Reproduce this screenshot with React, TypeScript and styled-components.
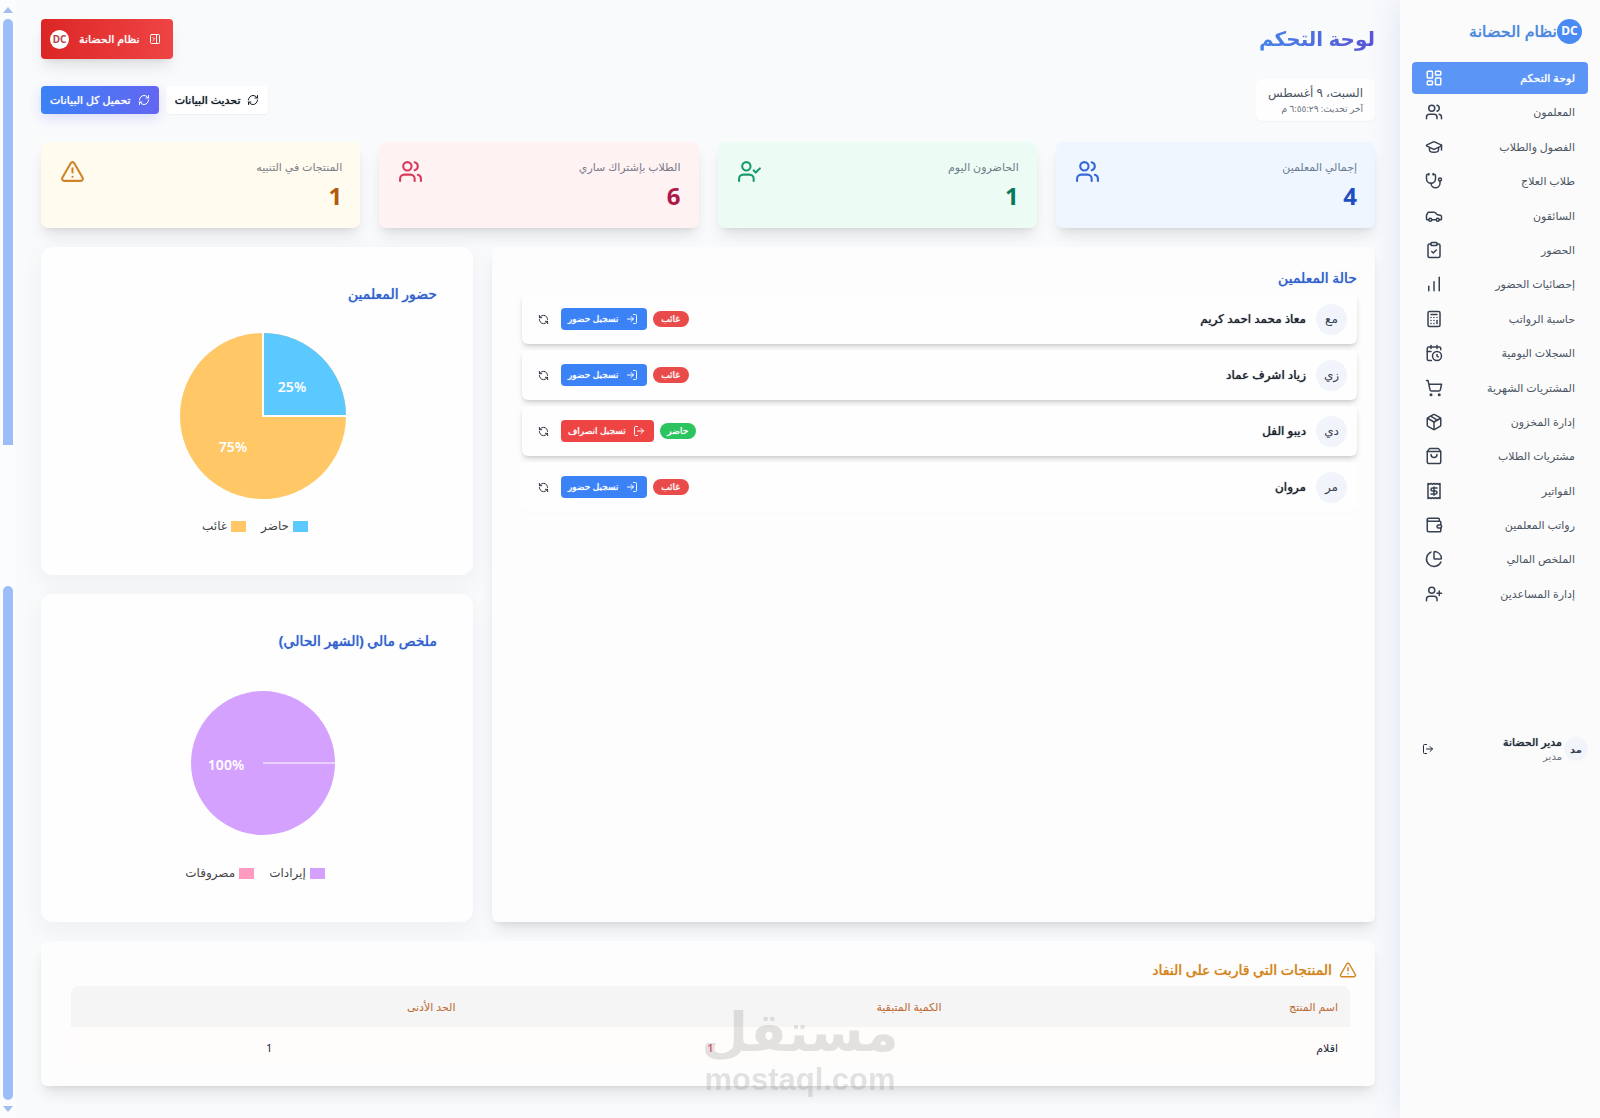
import React from 'react';
import styled, { createGlobalStyle, css } from 'styled-components';
import {
  LayoutDashboard,
  Users,
  GraduationCap,
  Stethoscope,
  Car,
  ClipboardCheck,
  ChartNoAxesColumnIncreasing,
  Calculator,
  CalendarClock,
  ShoppingCart,
  Package,
  ShoppingBag,
  Receipt,
  Wallet,
  ChartPie,
  UserPlus,
  UserCheck,
  TriangleAlert,
  RefreshCw,
  RefreshCcw,
  LogIn,
  LogOut,
  PanelRightClose,
} from 'lucide-react';

const GlobalStyle = createGlobalStyle`
  *, *::before, *::after { box-sizing: border-box; }
  body {
    margin: 0;
    background: #f9fafc;
    color: #1f2937;
    font-family: "Noto Sans", "DejaVu Sans", sans-serif;
    font-size: 11px;
    line-height: 16px;
  }
  h1, h2, p, ul, dl, dt, dd { margin: 0; padding: 0; }
  ul { list-style: none; }
  button { font-family: inherit; border: 0; cursor: pointer; }
`;

/* A weight between regular and bold for Arabic labels. */
const medium = css`
  font-weight: 500;
  text-shadow: 0 0 1px currentColor;
`;

const raised = css`
  box-shadow: 0 10px 15px -3px rgba(0, 0, 0, 0.1), 0 4px 6px -4px rgba(0, 0, 0, 0.1);
`;

/* ---------- Shell ---------- */

const Shell = styled.div`
  position: relative;
  display: flex;
  min-height: 100vh;
`;

const Sidebar = styled.aside`
  flex: 0 0 200px;
  z-index: 1;
  display: flex;
  flex-direction: column;
  padding: 18px 12px;
  background: #fbfbfc;
  box-shadow: 0 0 32px rgba(64, 88, 190, 0.14);
`;

const Main = styled.main`
  flex: 1;
  min-width: 0;
  padding: 19px 25px 31px;
  display: flex;
  flex-direction: column;
  gap: 19px;
`;

/* ---------- Sidebar ---------- */

const Brand = styled.div`
  display: flex;
  align-items: center;
  padding: 0 6px;
  height: 26px;
  margin-bottom: 18px;
  color: #4c86dd;
  font-size: 16px;
  ${medium}
`;

const BrandMark = styled.span<{ $size: number; $inverse?: boolean }>`
  display: flex;
  align-items: center;
  justify-content: center;
  width: ${(p) => p.$size}px;
  height: ${(p) => p.$size}px;
  border-radius: 50%;
  background: ${(p) => (p.$inverse ? '#ffffff' : '#4a8af4')};
  color: ${(p) => (p.$inverse ? '#b4444c' : '#ffffff')};
  font-size: ${(p) => (p.$inverse ? 10 : 12)}px;
  font-weight: 700;
  text-shadow: none;
`;

const NavList = styled.ul`
  display: flex;
  flex-direction: column;
  justify-content: space-between;
  height: 548px;
`;

const NavLink = styled.a<{ $active?: boolean }>`
  display: flex;
  align-items: center;
  justify-content: space-between;
  height: 32px;
  padding: 0 13px;
  border-radius: 4px;
  color: #4b5563;
  font-size: 11px;
  text-decoration: none;
  svg { color: #374151; }
  ${(p) =>
    p.$active &&
    css`
      background: #5b95f5;
      color: #ffffff;
      ${medium}
      svg { color: #ffffff; }
    `}
`;

const Account = styled.div`
  display: flex;
  align-items: center;
  justify-content: space-between;
  margin-top: 124px;
  padding-left: 4px;
`;

const AccountInfo = styled.div`
  display: flex;
  align-items: center;
  gap: 2px;
`;

const Avatar = styled.span<{ $size: number }>`
  display: flex;
  align-items: center;
  justify-content: center;
  width: ${(p) => p.$size}px;
  height: ${(p) => p.$size}px;
  border-radius: 50%;
  background: #f1f5fb;
  color: #374151;
  font-size: ${(p) => (p.$size > 24 ? 12 : 10)}px;
`;

const AccountName = styled.p`
  font-size: 11px;
  line-height: 15px;
  ${medium}
`;

const AccountRole = styled.p`
  color: #6b7280;
  font-size: 10px;
  line-height: 15px;
`;

const IconButton = styled.button`
  display: flex;
  align-items: center;
  justify-content: center;
  width: 24px;
  height: 24px;
  padding: 0;
  border-radius: 4px;
  background: transparent;
  color: #1f2937;
`;

/* ---------- Header ---------- */

const Header = styled.header`
  display: flex;
  align-items: center;
  justify-content: space-between;
  height: 40px;
`;

const PageTitle = styled.h1`
  font-size: 20px;
  line-height: 36px;
  font-weight: 700;
  color: transparent;
  background: linear-gradient(to left, #5b54d6, #4585e8);
  background-clip: text;
  -webkit-background-clip: text;
`;

const SystemButton = styled.button`
  display: flex;
  align-items: center;
  gap: 10px;
  height: 40px;
  padding: 0 12px 0 9px;
  border-radius: 4px;
  background: linear-gradient(to left, #ef4444, #dc2626);
  color: #ffffff;
  font-size: 11px;
  line-height: 16px;
  ${raised}
  ${medium}
`;

const Toolbar = styled.div`
  display: flex;
  align-items: center;
  justify-content: space-between;
  margin: 1px 0 2px;
`;

const DateCard = styled.div`
  padding: 5px 12px;
  border-radius: 6px;
  background: #fefefe;
  box-shadow: 0 1px 2px rgba(0, 0, 0, 0.04);
`;

const DateText = styled.p`
  color: #4b5563;
  font-size: 12px;
  line-height: 18px;
`;

const UpdatedText = styled.p`
  color: #6b7280;
  font-size: 9px;
  line-height: 14px;
`;

const Actions = styled.div`
  display: flex;
  gap: 7px;
`;

const ActionButton = styled.button<{ $primary?: boolean }>`
  display: flex;
  align-items: center;
  gap: 7px;
  height: 28px;
  padding: 0 9px;
  border-radius: 4px;
  background: ${(p) => (p.$primary ? 'linear-gradient(to left, #6366f1, #3b82f6)' : '#ffffff')};
  box-shadow: ${(p) =>
    p.$primary ? '0 4px 12px rgba(99, 102, 241, 0.2)' : '0 1px 2px rgba(0, 0, 0, 0.05)'};
  color: ${(p) => (p.$primary ? '#ffffff' : '#111827')};
  font-size: 11px;
  line-height: 16px;
  ${medium}
`;

/* ---------- Cards ---------- */

const StatGrid = styled.dl`
  display: grid;
  grid-template-columns: repeat(4, 1fr);
  gap: 19px;
`;

const StatCard = styled.div<{ $bg: string; $label: string; $value: string; $icon: string }>`
  display: flex;
  justify-content: space-between;
  height: 86px;
  padding: 17px 18px 17px 19px;
  border-radius: 7px;
  background: ${(p) => p.$bg};
  ${raised}
  dt { color: ${(p) => p.$label}; font-size: 11px; line-height: 16px; }
  dd { color: ${(p) => p.$value}; font-size: 24px; line-height: 34px; margin-top: 4px; font-weight: 700; }
  svg { color: ${(p) => p.$icon}; }
`;

const Panels = styled.div`
  display: grid;
  grid-template-columns: repeat(3, 1fr);
  gap: 19px;
`;

const Card = styled.section`
  padding: 21px 18px;
  border-radius: 6px;
  background: #fdfdfd;
  ${raised}
`;

const TeachersCard = styled(Card)`
  grid-column: span 2;
`;

const CardTitle = styled.h2<{ $warn?: boolean }>`
  display: flex;
  align-items: center;
  gap: 7px;
  color: ${(p) => (p.$warn ? '#d38422' : '#3160cc')};
  font-size: 14px;
  line-height: 20px;
  ${medium}
`;

const TeacherList = styled.ul`
  display: flex;
  flex-direction: column;
  gap: 6px;
  margin: 6px 0 0 12px;
`;

const TeacherRow = styled.li`
  display: flex;
  align-items: center;
  justify-content: space-between;
  height: 50px;
  padding: 0 10px 0 9px;
  border-radius: 6px;
  background: #fefefe;
  box-shadow: 0 4px 6px -1px rgba(0, 0, 0, 0.14), 0 2px 4px -2px rgba(0, 0, 0, 0.14);
  &:last-child { box-shadow: 0 1px 1px -1px rgba(0, 0, 0, 0.12); }
`;

const TeacherName = styled.div`
  display: flex;
  align-items: center;
  gap: 10px;
  font-size: 12px;
  color: #1f2430;
  ${medium}
  span { font-weight: 400; text-shadow: none; }
`;

const RowActions = styled.div`
  display: flex;
  align-items: center;
  gap: 6px;
`;

const Badge = styled.span<{ $present?: boolean }>`
  width: 36px;
  border-radius: 8px;
  text-align: center;
  background: ${(p) => (p.$present ? '#2bc45f' : '#e94b4b')};
  color: #ffffff;
  font-size: 9px;
  line-height: 16px;
  ${medium}
`;

const CheckButton = styled.button<{ $out?: boolean }>`
  display: flex;
  align-items: center;
  gap: 7px;
  height: 22px;
  padding: 0 9px 0 7px;
  border-radius: 4px;
  background: ${(p) => (p.$out ? '#ef4444' : '#3b82f6')};
  color: #ffffff;
  font-size: 9px;
  line-height: 16px;
  ${medium}
`;

/* ---------- Charts ---------- */

const ChartColumn = styled.div`
  display: grid;
  gap: 19px;
`;

const ChartCard = styled.section`
  height: 328px;
  padding: 37px 36px 0;
  border-radius: 12px;
  background: #fefefe;
  box-shadow: 0 8px 24px rgba(30, 41, 59, 0.05);
`;

const PieFrame = styled.div`
  display: flex;
  justify-content: center;
  padding-left: 12px;
  margin-top: 11px;
  height: 202px;
  align-items: center;
  svg text { fill: #ffffff; font-size: 14px; font-weight: 600; text-anchor: middle; }
`;

const Legend = styled.ul`
  display: flex;
  justify-content: center;
  gap: 15px;
  padding-right: 4px;
`;

const LegendItem = styled.li<{ $color: string }>`
  display: flex;
  align-items: center;
  gap: 4px;
  color: #444444;
  font-size: 12px;
  line-height: 18px;
  &::before { content: ''; width: 15px; height: 11px; background: ${(p) => p.$color}; }
`;

/* ---------- Stock table ---------- */

const StockCard = styled(Card)`
  padding: 19px 18px 18px;
`;

const StockTable = styled.table`
  width: calc(100% - 19px);
  margin: 6px 7px 0 12px;
  border-collapse: separate;
  border-spacing: 0;
  table-layout: fixed;
  th, td { height: 41px; padding: 0 12px; font-size: 11px; line-height: 16px; }
  th { background: #f5f5f5; color: #bd6b35; text-align: right; font-weight: 500; }
  th:nth-child(1) { width: 31%; border-radius: 0 8px 0 0; }
  th:nth-child(2) { width: 38%; }
  th:nth-child(3) { width: 31%; border-radius: 8px 0 0 0; }
  td { background: #fefdfb; color: #1f2937; text-align: center; }
  td:nth-child(1) { text-align: right; }
  td:nth-child(2) { color: #f0566a; font-weight: 600; }
`;

/* ---------- Watermark ---------- */

const Watermark = styled.div`
  position: absolute;
  left: 0;
  right: 0;
  bottom: 21px;
  color: #787873;
  opacity: 0.2;
  text-align: center;
  font-weight: 700;
  pointer-events: none;
`;

const WatermarkName = styled.p`
  font-family: "DejaVu Sans", sans-serif;
  font-size: 54px;
  line-height: 60px;
`;

const WatermarkSite = styled.p`
  font-family: "Liberation Sans", sans-serif;
  font-size: 31px;
  line-height: 34px;
`;

/* ---------- Scroll rail ---------- */

const Rail = styled.div`
  flex: 0 0 16px;
  display: flex;
  flex-direction: column;
  align-items: flex-end;
  gap: 6px;
  padding: 7px 3px 6px;
  background: #fbfcfd;
`;

const RailArrow = styled.svg`
  width: 10px;
  height: 6px;
  fill: #a3bdee;
`;

const Thumb = styled.div<{ $grow: number; $open?: boolean }>`
  flex: ${(p) => p.$grow} 1 0;
  width: 10px;
  border-radius: ${(p) => (p.$open ? '5px 5px 0 0' : '5px')};
  background: #9dbdf8;
`;

const RailGap = styled.div`
  flex: 128 1 0;
`;

/* ---------- Data ---------- */

const navItems = [
  { label: 'لوحة التحكم', Icon: LayoutDashboard, active: true },
  { label: 'المعلمون', Icon: Users },
  { label: 'الفصول والطلاب', Icon: GraduationCap },
  { label: 'طلاب العلاج', Icon: Stethoscope },
  { label: 'السائقون', Icon: Car },
  { label: 'الحضور', Icon: ClipboardCheck },
  { label: 'إحصائيات الحضور', Icon: ChartNoAxesColumnIncreasing },
  { label: 'حاسبة الرواتب', Icon: Calculator },
  { label: 'السجلات اليومية', Icon: CalendarClock },
  { label: 'المشتريات الشهرية', Icon: ShoppingCart },
  { label: 'إدارة المخزون', Icon: Package },
  { label: 'مشتريات الطلاب', Icon: ShoppingBag },
  { label: 'الفواتير', Icon: Receipt },
  { label: 'رواتب المعلمين', Icon: Wallet },
  { label: 'الملخص المالي', Icon: ChartPie },
  { label: 'إدارة المساعدين', Icon: UserPlus },
];

const stats = [
  { label: 'إجمالي المعلمين', value: 4, Icon: Users, bg: '#eff6ff', tone: '#6b7c93', strong: '#1e4fc2', icon: '#3468d8' },
  { label: 'الحاضرون اليوم', value: 1, Icon: UserCheck, bg: '#ecfcf4', tone: '#6b7c88', strong: '#08785a', icon: '#179a6e' },
  { label: 'الطلاب بإشتراك ساري', value: 6, Icon: Users, bg: '#fef2f3', tone: '#7b7988', strong: '#b01846', icon: '#d93a5c' },
  { label: 'المنتجات في التنبيه', value: 1, Icon: TriangleAlert, bg: '#fffbee', tone: '#7a7f88', strong: '#b35a12', icon: '#cf8427' },
];

const teachers = [
  { initials: 'مع', name: 'معاذ محمد احمد كريم', present: false },
  { initials: 'زي', name: 'زياد اشرف عماد', present: false },
  { initials: 'دي', name: 'ديبو الفل', present: true },
  { initials: 'مر', name: 'مروان', present: false },
];

/* ---------- Page ---------- */

export default function App() {
  return (
    <>
      <GlobalStyle />
      <Shell dir="rtl" lang="ar">
        <Sidebar>
          <Brand>
            <BrandMark $size={25}>DC</BrandMark>
            نظام الحضانة
          </Brand>
          <nav>
            <NavList>
              {navItems.map(({ label, Icon, active }) => (
                <li key={label}>
                  <NavLink href="#" $active={active}>
                    {label}
                    <Icon size={18} />
                  </NavLink>
                </li>
              ))}
            </NavList>
          </nav>
          <Account>
            <AccountInfo>
              <Avatar $size={24}>
                <b>مد</b>
              </Avatar>
              <div>
                <AccountName>مدير الحضانة</AccountName>
                <AccountRole>مدير</AccountRole>
              </div>
            </AccountInfo>
            <IconButton aria-label="تسجيل الخروج">
              <LogOut size={12} />
            </IconButton>
          </Account>
        </Sidebar>

        <Main>
          <Header>
            <PageTitle>لوحة التحكم</PageTitle>
            <SystemButton>
              <PanelRightClose size={12} />
              نظام الحضانة
              <BrandMark $size={19} $inverse>DC</BrandMark>
            </SystemButton>
          </Header>

          <Toolbar>
            <DateCard>
              <DateText>السبت، ٩ أغسطس</DateText>
              <UpdatedText>آخر تحديث: ٦:٥٥:٢٩ م</UpdatedText>
            </DateCard>
            <Actions>
              <ActionButton>
                <RefreshCw size={12} />
                تحديث البيانات
              </ActionButton>
              <ActionButton $primary>
                <RefreshCw size={12} />
                تحميل كل البيانات
              </ActionButton>
            </Actions>
          </Toolbar>

          <StatGrid>
            {stats.map(({ label, value, Icon, bg, tone, strong, icon }) => (
              <StatCard key={label} $bg={bg} $label={tone} $value={strong} $icon={icon}>
                <div>
                  <dt>{label}</dt>
                  <dd>{value}</dd>
                </div>
                <Icon size={25} />
              </StatCard>
            ))}
          </StatGrid>

          <Panels>
            <TeachersCard>
              <CardTitle>حالة المعلمين</CardTitle>
              <TeacherList>
                {teachers.map((t) => (
                  <TeacherRow key={t.name}>
                    <TeacherName>
                      <Avatar $size={31}>{t.initials}</Avatar>
                      {t.name}
                    </TeacherName>
                    <RowActions>
                      <Badge $present={t.present}>{t.present ? 'حاضر' : 'غائب'}</Badge>
                      <CheckButton $out={t.present}>
                        {t.present ? <LogOut size={12} /> : <LogIn size={12} />}
                        {t.present ? 'تسجيل انصراف' : 'تسجيل حضور'}
                      </CheckButton>
                      <IconButton aria-label="تحديث">
                        <RefreshCcw size={11} />
                      </IconButton>
                    </RowActions>
                  </TeacherRow>
                ))}
              </TeacherList>
            </TeachersCard>

            <ChartColumn>
              <ChartCard>
                <CardTitle>حضور المعلمين</CardTitle>
                <PieFrame>
                  <svg width="168" height="168" viewBox="-84 -84 168 168" direction="ltr">
                    <circle r="83" fill="#ffc766" />
                    <path d="M0 0V-83A83 83 0 0 1 83 0Z" fill="#5bc8ff" />
                    <path d="M0 -83V0H83" fill="none" stroke="#ffffff" strokeWidth="2" />
                    <text x="29" y="-24">25%</text>
                    <text x="-30" y="36">75%</text>
                  </svg>
                </PieFrame>
                <Legend>
                  <LegendItem $color="#5bc8ff">حاضر</LegendItem>
                  <LegendItem $color="#ffc766">غائب</LegendItem>
                </Legend>
              </ChartCard>
              <ChartCard>
                <CardTitle>ملخص مالي (الشهر الحالي)</CardTitle>
                <PieFrame>
                  <svg width="146" height="146" viewBox="-73 -73 146 146" direction="ltr">
                    <circle r="72" fill="#d4a1ff" />
                    <path d="M0 0H72" stroke="#ffffff" strokeWidth="1" />
                    <text x="-37" y="7">100%</text>
                  </svg>
                </PieFrame>
                <Legend>
                  <LegendItem $color="#d4a1ff">إيرادات</LegendItem>
                  <LegendItem $color="#ff9ac0">مصروفات</LegendItem>
                </Legend>
              </ChartCard>
            </ChartColumn>
          </Panels>

          <StockCard>
            <CardTitle $warn>
              <TriangleAlert size={18} />
              المنتجات التي قاربت على النفاد
            </CardTitle>
            <StockTable>
              <thead>
                <tr>
                  <th scope="col">اسم المنتج</th>
                  <th scope="col">الكمية المتبقية</th>
                  <th scope="col">الحد الأدنى</th>
                </tr>
              </thead>
              <tbody>
                <tr>
                  <td>اقلام</td>
                  <td>1</td>
                  <td>1</td>
                </tr>
              </tbody>
            </StockTable>
          </StockCard>
        </Main>

        <Rail aria-hidden="true">
          <RailArrow viewBox="0 0 10 6">
            <path d="M0 6 5 0l5 6Z" />
          </RailArrow>
          <Thumb $grow={426} $open />
          <RailGap />
          <Thumb $grow={514} />
          <RailArrow viewBox="0 0 10 6">
            <path d="M0 0h10L5 6Z" />
          </RailArrow>
        </Rail>

        <Watermark>
          <WatermarkName>مستقل</WatermarkName>
          <WatermarkSite>mostaql.com</WatermarkSite>
        </Watermark>
      </Shell>
    </>
  );
}
